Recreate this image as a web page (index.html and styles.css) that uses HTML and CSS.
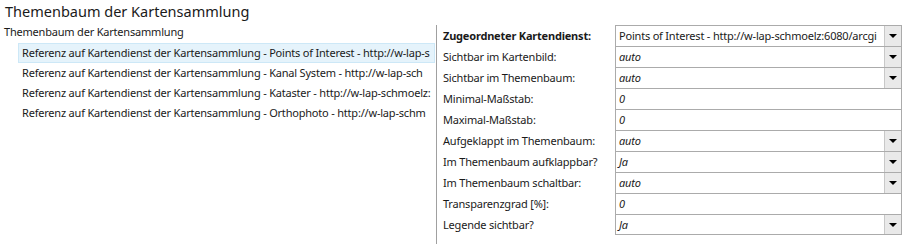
FILE: index.html
```html
<!DOCTYPE html>
<html lang="de">
<head>
    <meta charset="UTF-8">
    <title>Themenbaum der Kartensammlung</title>
    <link rel="stylesheet" href="styles.css">
</head>
<body>
    <h1 class="title">Themenbaum der Kartensammlung</h1>

    <div class="editor">
        <div class="tree">
            <div class="tree-root">Themenbaum der Kartensammlung</div>
            <ul class="tree-items">
                <li class="tree-item selected">Referenz auf Kartendienst der Kartensammlung - Points of Interest - http://w-lap-s</li>
                <li class="tree-item">Referenz auf Kartendienst der Kartensammlung - Kanal System - http://w-lap-sch</li>
                <li class="tree-item">Referenz auf Kartendienst der Kartensammlung - Kataster - http://w-lap-schmoelz:</li>
                <li class="tree-item">Referenz auf Kartendienst der Kartensammlung - Orthophoto - http://w-lap-schm</li>
            </ul>
        </div>

        <div class="props">
            <div class="prop">
                <label class="prop-label bold">Zugeordneter Kartendienst:</label>
                <div class="prop-value">
                    <span class="value-text">Points of Interest - http://w-lap-schmoelz:6080/arcgi</span>
                    <span class="drop"></span>
                </div>
            </div>
            <div class="prop">
                <label class="prop-label">Sichtbar im Kartenbild:</label>
                <div class="prop-value">
                    <span class="value-text italic">auto</span>
                    <span class="drop"></span>
                </div>
            </div>
            <div class="prop">
                <label class="prop-label">Sichtbar im Themenbaum:</label>
                <div class="prop-value">
                    <span class="value-text italic">auto</span>
                    <span class="drop"></span>
                </div>
            </div>
            <div class="prop">
                <label class="prop-label">Minimal-Maßstab:</label>
                <div class="prop-value">
                    <span class="value-text italic">0</span>
                </div>
            </div>
            <div class="prop">
                <label class="prop-label">Maximal-Maßstab:</label>
                <div class="prop-value">
                    <span class="value-text italic">0</span>
                </div>
            </div>
            <div class="prop">
                <label class="prop-label">Aufgeklappt im Themenbaum:</label>
                <div class="prop-value">
                    <span class="value-text italic">auto</span>
                    <span class="drop"></span>
                </div>
            </div>
            <div class="prop">
                <label class="prop-label">Im Themenbaum aufklappbar?</label>
                <div class="prop-value">
                    <span class="value-text italic">Ja</span>
                    <span class="drop"></span>
                </div>
            </div>
            <div class="prop">
                <label class="prop-label">Im Themenbaum schaltbar:</label>
                <div class="prop-value">
                    <span class="value-text italic">auto</span>
                    <span class="drop"></span>
                </div>
            </div>
            <div class="prop">
                <label class="prop-label">Transparenzgrad [%]:</label>
                <div class="prop-value">
                    <span class="value-text italic">0</span>
                </div>
            </div>
            <div class="prop">
                <label class="prop-label">Legende sichtbar?</label>
                <div class="prop-value">
                    <span class="value-text italic">Ja</span>
                    <span class="drop"></span>
                </div>
            </div>
        </div>
    </div>
</body>
</html>
```

FILE: styles.css
```css
body {
    margin: 0;
    font-family: 'Noto Sans', 'Open Sans', sans-serif;
    font-size: 11px;
    letter-spacing: -0.2px;
    color: #1a1a1a;
    background: #fff;
    overflow: hidden;
}

.title {
    margin: 0;
    padding: 0 0 0 5px;
    height: 22px;
    line-height: 22px;
    font-size: 14.5px;
    font-weight: normal;
    letter-spacing: 0;
}

.editor {
    display: flex;
    height: 222px;
}

/* linke Seite: Baum */
.tree {
    flex: 0 0 436px;
    border-right: 1px solid #a0a0a0;
    overflow: hidden;
    margin-top: 3px;
}

.tree-root {
    height: 18px;
    line-height: 14px;
    padding-left: 4px;
    white-space: nowrap;
}

.tree-items {
    list-style: none;
    margin: 0;
    padding: 0 1px 0 18px;
}

.tree-item {
    height: 20px;
    line-height: 18px;
    padding-left: 3px;
    border: 1px solid transparent;
    box-sizing: border-box;
    white-space: nowrap;
    overflow: hidden;
}

.tree-item.selected {
    background: #e5f3fb;
    border-color: #cde8f7;
}

/* rechte Seite: Eigenschaften */
.props {
    flex: 1;
    min-width: 0;
    margin-top: 3px;
    padding-left: 6px;
    display: flex;
    flex-direction: column;
}

.prop {
    display: flex;
    height: 21px;
}

.prop-label {
    flex: 0 0 172px;
    line-height: 21px;
    white-space: nowrap;
}

.prop-label.bold {
    font-weight: bold;
}

.prop-value {
    flex: 0 0 287px;
    min-width: 0;
    display: flex;
    border: 1px solid #ababab;
    border-bottom: none;
    box-sizing: border-box;
}

.prop:last-child .prop-value {
    border-bottom: 1px solid #ababab;
}

.value-text {
    flex: 1;
    min-width: 0;
    padding-left: 3px;
    line-height: 19px;
    white-space: nowrap;
    overflow: hidden;
}

.value-text.italic {
    font-style: italic;
}

.drop {
    flex: 0 0 16px;
    background: #e9e9e9;
    border-left: 1px solid #c8c8c8;
    position: relative;
}

.drop::after {
    content: '';
    position: absolute;
    left: 4px;
    top: 8px;
    border-left: 4px solid transparent;
    border-right: 4px solid transparent;
    border-top: 4px solid #000;
}
```
